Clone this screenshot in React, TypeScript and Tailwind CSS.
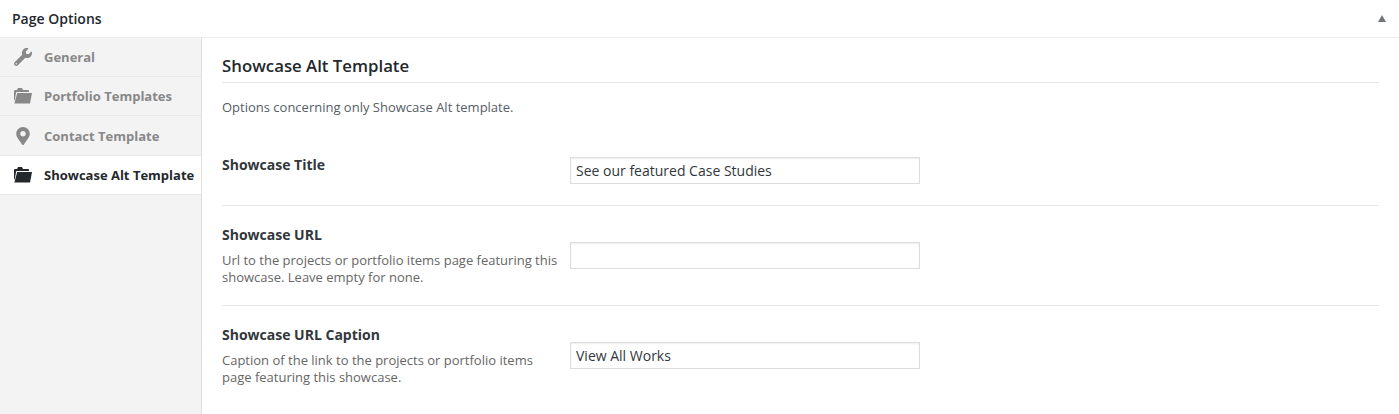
import { FaWrench, FaMapMarkerAlt } from "react-icons/fa";

const FolderIcon = () => (
  <svg width="18" height="16" viewBox="0 0 18 16" fill="currentColor">
    <path d="M0 13V3q0-1 1-1h2l1-2h4l1 2h5q1 0 1 1v1H3q-1 0-1 1l-1 6z" />
    <path d="M3.2 5H18l-2 10.5H.4z" />
  </svg>
);

const tabs = [
  { label: "General", icon: <FaWrench size={20} />, h: "h-[39px]" },
  { label: "Portfolio Templates", icon: <FolderIcon />, h: "h-[39px]" },
  { label: "Contact Template", icon: <FaMapMarkerAlt size={18} />, h: "h-[40px]" },
  { label: "Showcase Alt Template", icon: <FolderIcon />, h: "h-[39px]", active: true },
];

const rows = [
  {
    title: "Showcase Title",
    value: "See our featured Case Studies",
    rowClass: "h-[85px] pt-[36px]",
    labelClass: "-mt-[2px]",
  },
  {
    title: "Showcase URL",
    desc: "Url to the projects or portfolio items page featuring this showcase. Leave empty for none.",
    value: "",
    rowClass: "h-[100px] pt-[36px]",
    labelClass: "-mt-[17px]",
  },
  {
    title: "Showcase URL Caption",
    desc: "Caption of the link to the projects or portfolio items page featuring this showcase.",
    value: "View All Works",
    rowClass: "h-[100px] pt-[36px]",
    labelClass: "-mt-[17px]",
    last: true,
  },
];

const App = () => {
  return (
    <div className="w-[1399px] h-[414px] overflow-hidden bg-white font-['Open_Sans',sans-serif] text-[#32373c]">
      <div className="h-[38px] border-b border-[#eeeeee] flex items-center justify-between pl-3 pr-[13px]">
        <h2 className="text-[14px] font-semibold text-[#23282d]">Page Options</h2>
        <div className="w-0 h-0 border-l-[4px] border-r-[4px] border-b-[7px] border-l-transparent border-r-transparent border-b-[#72777c]" />
      </div>
      <div className="flex h-[376px]">
        <div className="w-[202px] shrink-0 bg-[#f3f3f3] border-r border-[#dfdfdf]">
          {tabs.map((tab) => (
            <div
              key={tab.label}
              className={`${tab.h} flex items-center pl-[14px] border-b border-[#e8e8e8] ${
                tab.active ? "bg-white text-[#23282d] w-[201px]" : "text-[#888888]"
              }`}
            >
              <span className="w-[18px] flex justify-center">{tab.icon}</span>
              <span className="ml-[12px] mt-[2px] text-[13px] font-bold whitespace-nowrap">{tab.label}</span>
            </div>
          ))}
        </div>
        <div className="flex-1 pl-5 pr-5">
          <h3 className="h-[45px] pt-[16px] border-b border-[#e5e5e5] text-[16.8px] leading-[24px] font-semibold text-[#23282d]">
            Showcase Alt Template
          </h3>
          <p className="h-[38px] pt-[15px] text-[13px] leading-[18px] text-[#555d66]">
            Options concerning only Showcase Alt template.
          </p>
          {rows.map((row) => (
            <div
              key={row.title}
              className={`flex ${row.rowClass} ${row.last ? "" : "border-b border-[#e8e8e8]"}`}
            >
              <div className={`w-[348px] pr-[8px] ${row.labelClass}`}>
                <div className="text-[14px] leading-[20px] font-bold text-[#32373c]">{row.title}</div>
                {row.desc && (
                  <p className="mt-[7px] text-[13px] leading-[17px] text-[#666666]">{row.desc}</p>
                )}
              </div>
              <input
                readOnly
                value={row.value}
                className="w-[350px] h-[27px] border border-[#dddddd] px-[5px] text-[14px] text-[#32373c] shadow-[inset_0_1px_2px_rgba(0,0,0,0.07)] outline-none"
              />
            </div>
          ))}
        </div>
      </div>
    </div>
  );
};

export default App;
